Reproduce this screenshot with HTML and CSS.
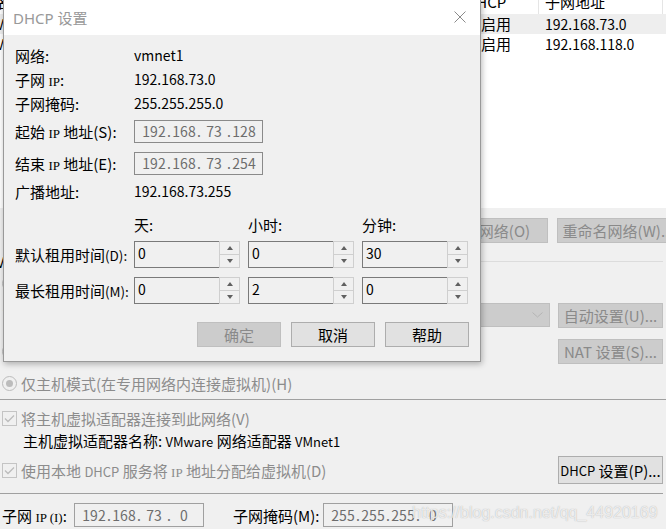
FILE: index.html
```html
<!DOCTYPE html>
<html lang="zh-CN">
<head>
    <meta charset="UTF-8">
    <title>虚拟网络编辑器 - DHCP 设置</title>
    <link rel="stylesheet" href="styles.css">
</head>
<body>
    <!-- background: virtual network editor window -->
    <div class="window">
        <div class="net-list">
            <div class="list-head">
                <span>名称</span><span>DHCP</span><span>子网地址</span>
            </div>
            <div class="list-row selected">
                <span class="num">VMnet1</span><span>已启用</span><span class="num">192.168.73.0</span>
            </div>
            <div class="list-row">
                <span class="num">VMnet8</span><span>已启用</span><span class="num">192.168.118.0</span>
            </div>
        </div>

        <div class="panel">
            <div class="net-buttons">
                <button class="btn" disabled>添加网络(E)...</button>
                <button class="btn btn-remove" disabled>移除网络(O)</button>
                <button class="btn btn-wide" disabled>重命名网络(W)...</button>
            </div>

            <div class="group-title"><span>VMnet 信息</span><i class="rule"></i></div>

            <div class="opt-row gap5">
                <span class="radio"></span>
                <span class="muted">桥接模式(将虚拟机直接连接到外部网络)(B)</span>
            </div>

            <div class="bridge-row">
                <span class="muted">已桥接至(G):</span>
                <div class="combo">
                    <svg width="11" height="6" viewBox="0 0 11 6"><polyline points="0.5,0.5 5.5,5 10.5,0.5" fill="none" stroke="#b4b4b4" stroke-width="1"/></svg>
                </div>
                <button class="btn" disabled>自动设置(U)...</button>
            </div>

            <div class="nat-row">
                <span class="opt">
                    <span class="radio"></span>
                    <span class="muted">NAT 模式(与虚拟机共享主机的 IP 地址)(N)</span>
                </span>
                <button class="btn" disabled>NAT 设置(S)...</button>
            </div>

            <div class="opt-row gap11">
                <span class="radio checked"></span>
                <span class="muted">仅主机模式(在专用网络内连接虚拟机)(H)</span>
            </div>

            <hr class="sep sep-full">

            <div class="opt-row gap10">
                <span class="check">
                    <svg width="11" height="9" viewBox="0 0 11 9"><polyline points="1,4.5 4,7.5 10,1.5" fill="none" stroke="#bcbcbc" stroke-width="1.3"/></svg>
                </span>
                <span class="muted">将主机虚拟适配器连接到此网络(V)</span>
            </div>

            <div class="adapter-name">主机虚拟适配器名称: <span class="lat">VMware</span> 网络适配器 <span class="lat">VMnet1</span></div>

            <div class="dhcp-row">
                <span class="opt">
                    <span class="check">
                        <svg width="11" height="9" viewBox="0 0 11 9"><polyline points="1,4.5 4,7.5 10,1.5" fill="none" stroke="#bcbcbc" stroke-width="1.3"/></svg>
                    </span>
                    <span class="muted">使用本地 <span class="sm">DHCP</span> 服务将 <span class="ip">IP</span> 地址分配给虚拟机(D)</span>
                </span>
                <button class="btn btn-on btn-tall"><span class="sm">DHCP</span>&nbsp;设置(P)...</button>
            </div>

            <hr class="sep sep-left">

            <div class="subnet-row">
                <span class="subnet-label">子网 <span class="ip">IP (I)</span>:</span>
                <div class="ipbox">
                    <span class="f">192</span><span class="d">.</span><span class="f">168</span><span class="d">.</span><span class="f">73</span><span class="d">.</span><span class="f">0</span>
                </div>
                <span class="mask-label">子网掩码(M):</span>
                <div class="ipbox">
                    <span class="f">255</span><span class="d">.</span><span class="f">255</span><span class="d">.</span><span class="f">255</span><span class="d">.</span><span class="f">0</span>
                </div>
            </div>
        </div>
    </div>

    <!-- foreground: DHCP dialog -->
    <div class="dialog">
        <div class="dlg-title">
            <span>DHCP 设置</span>
            <svg class="close" width="12" height="12" viewBox="0 0 12 12"><path d="M0.5 0.5 L11.5 11.5 M11.5 0.5 L0.5 11.5" stroke="#8a8a8a" stroke-width="1" fill="none"/></svg>
        </div>
        <div class="dlg-body">
            <div class="dlg-row">
                <span class="dlg-label">网络:</span><span class="num">vmnet1</span>
            </div>
            <div class="dlg-row">
                <span class="dlg-label">子网 <span class="ip">IP</span>:</span><span class="num">192.168.73.0</span>
            </div>
            <div class="dlg-row">
                <span class="dlg-label">子网掩码:</span><span class="num">255.255.255.0</span>
            </div>
            <div class="dlg-row mt4">
                <span class="dlg-label">起始 <span class="ip">IP</span> 地址(S):</span>
                <div class="ipbox ipbox-dlg">
                    <span class="f">192</span><span class="d">.</span><span class="f">168</span><span class="d">.</span><span class="f">73</span><span class="d">.</span><span class="f">128</span>
                </div>
            </div>
            <div class="dlg-row mt8">
                <span class="dlg-label">结束 <span class="ip">IP</span> 地址(E):</span>
                <div class="ipbox ipbox-dlg">
                    <span class="f">192</span><span class="d">.</span><span class="f">168</span><span class="d">.</span><span class="f">73</span><span class="d">.</span><span class="f">254</span>
                </div>
            </div>
            <div class="dlg-row mt4">
                <span class="dlg-label">广播地址:</span><span class="num">192.168.73.255</span>
            </div>

            <div class="lease-head">
                <span>天:</span><span>小时:</span><span>分钟:</span>
            </div>
            <div class="lease-row mt6">
                <span class="dlg-label">默认租用时间<span class="key">(D):</span></span>
                <div class="spin"><span class="spin-val">0</span><span class="spin-btns"><i class="up"></i><i class="down"></i></span></div>
                <div class="spin"><span class="spin-val">0</span><span class="spin-btns"><i class="up"></i><i class="down"></i></span></div>
                <div class="spin"><span class="spin-val">30</span><span class="spin-btns"><i class="up"></i><i class="down"></i></span></div>
            </div>
            <div class="lease-row mt9">
                <span class="dlg-label">最长租用时间<span class="key">(M):</span></span>
                <div class="spin"><span class="spin-val">0</span><span class="spin-btns"><i class="up"></i><i class="down"></i></span></div>
                <div class="spin"><span class="spin-val">2</span><span class="spin-btns"><i class="up"></i><i class="down"></i></span></div>
                <div class="spin"><span class="spin-val">0</span><span class="spin-btns"><i class="up"></i><i class="down"></i></span></div>
            </div>

            <div class="dlg-buttons">
                <button class="btn btn-dlg" disabled>确定</button>
                <button class="btn btn-on btn-dlg">取消</button>
                <button class="btn btn-on btn-dlg">帮助</button>
            </div>
        </div>
    </div>

    <div class="watermark">https://blog.csdn.net/qq_44920169</div>
</body>
</html>
```

FILE: styles.css
```css
* {
    box-sizing: border-box;
}
html, body {
    margin: 0;
    padding: 0;
}
body {
    width: 666px;
    height: 529px;
    overflow: hidden;
    position: relative;
    background-color: #f0f0f0;
    font-family: "Noto Sans CJK SC", "Noto Sans", sans-serif;
    font-size: 15px;
    color: #000;
}
button {
    font: inherit;
    color: inherit;
    margin: 0;
    padding: 0;
}
.num {
    font-size: 14px;
}
.sm, .lat {
    font-size: 13px;
}
.key {
    font-size: 13.5px;
}
.ip {
    font-family: "Liberation Serif", serif;
    font-size: 13px;
}
.muted {
    color: #8c8c8c;
    white-space: nowrap;
}

/* network list */
.net-list {
    height: 218px;
    margin-top: -10px;
    margin-left: -4px;
    background-color: #fff;
    line-height: 20px;
    white-space: nowrap;
}
.list-head {
    display: grid;
    grid-template-columns: 470px 72px 125px;
    height: 24px;
    line-height: 24px;
}
.list-head span:nth-child(3) {
    border-left: 1px solid #e5e5e5;
    border-right: 1px solid #e5e5e5;
    padding-left: 6px;
}
.list-row {
    display: grid;
    grid-template-columns: 470px 79px 1fr;
    height: 20px;
}
.list-row.selected {
    background-color: #eeeeee;
}

/* lower panel */
.panel {
    padding: 0 3px 0 2px;
}
.btn {
    display: flex;
    align-items: center;
    justify-content: center;
    flex-shrink: 0;
    width: 105px;
    height: 25px;
    background-color: #cccccc;
    border: 1px solid #bfbfbf;
    color: #8a8a8a;
    white-space: nowrap;
}
.btn-on {
    background-color: #e1e1e1;
    border-color: #adadad;
    color: #000;
}
.btn-wide {
    width: 122px;
}
.btn-remove {
    padding-right: 12px;
}
.btn-tall {
    height: 28px;
}
.net-buttons {
    display: flex;
    gap: 9px;
    margin-top: 10px;
    padding-left: 327px;
}
.group-title {
    display: flex;
    align-items: center;
    gap: 6px;
    height: 18px;
    margin: 9px 0 0 -6px;
    white-space: nowrap;
}
.rule {
    flex: 1;
    height: 1px;
    background-color: #dcdcdc;
}
.opt-row, .opt {
    display: flex;
    align-items: center;
    gap: 4px;
    height: 16px;
}
.gap5 { margin-top: 5px; }
.gap10 { margin-top: 10px; }
.gap11 { margin-top: 11px; }
.radio {
    width: 15px;
    height: 15px;
    border-radius: 50%;
    border: 1px solid #bcbcbc;
    background-color: #f0f0f0;
    display: flex;
    align-items: center;
    justify-content: center;
    flex-shrink: 0;
}
.radio.checked::after {
    content: "";
    width: 7px;
    height: 7px;
    border-radius: 50%;
    background-color: #bcbcbc;
}
.check {
    width: 15px;
    height: 15px;
    border: 1px solid #c4c4c4;
    background-color: #f0f0f0;
    display: flex;
    align-items: center;
    justify-content: center;
    flex-shrink: 0;
}
.bridge-row {
    display: flex;
    align-items: center;
    gap: 8px;
    height: 26px;
    margin-top: 11px;
}
.combo {
    margin-left: auto;
    width: 300px;
    height: 24px;
    background-color: #cccccc;
    border: 1px solid #bfbfbf;
    display: flex;
    align-items: center;
    justify-content: flex-end;
    padding-right: 6px;
}
.nat-row, .dhcp-row {
    display: flex;
    align-items: center;
    justify-content: space-between;
}
.nat-row {
    margin-top: 11px;
    height: 25px;
}
.dhcp-row {
    margin-top: 7px;
    height: 28px;
}
.sep {
    border: none;
    height: 1px;
    background-color: #a0a0a0;
    margin: 0;
}
.sep-full {
    margin: 8px -3px 0 -2px;
}
.sep-left {
    margin: 9px 0 0 -2px;
}
.adapter-name {
    margin: 7px 0 0 21px;
    height: 16px;
    line-height: 16px;
    white-space: nowrap;
}
.subnet-row {
    display: flex;
    align-items: center;
    height: 24px;
    margin-top: 9px;
    white-space: nowrap;
}
.subnet-label {
    width: 72px;
}
.mask-label {
    width: 90px;
    margin-left: 29px;
}

/* ip address control */
.ipbox {
    display: flex;
    align-items: center;
    width: 130px;
    height: 24px;
    padding-left: 6px;
    border: 1px solid #a0a0a0;
    background-color: #f0f0f0;
    color: #6d6d6d;
    font-size: 14px;
}
.ipbox .f {
    width: 26px;
    text-align: center;
}
.ipbox .d {
    width: 4px;
    text-align: center;
}
.ipbox-dlg {
    width: 129px;
    height: 23px;
    border-color: #8a8a8a;
}

/* dialog */
.dialog {
    position: absolute;
    top: -1px;
    left: 3px;
    width: 478px;
    background-color: #f0f0f0;
    border: 1px solid #999;
    box-shadow: 1px 2px 6px rgba(0, 0, 0, 0.28);
}
.dlg-title {
    display: flex;
    align-items: center;
    justify-content: space-between;
    height: 35px;
    padding: 0 14px 1px 9px;
    background-color: #fff;
    font-family: "Noto Sans", "Noto Sans CJK SC", sans-serif;
    font-size: 15px;
    color: #999;
}
.dlg-body {
    padding: 8px 11px 14px 11px;
}
.dlg-row {
    display: flex;
    align-items: center;
    height: 24px;
    white-space: nowrap;
}
.dlg-label {
    width: 119px;
    flex-shrink: 0;
    white-space: nowrap;
}
.mt4 { margin-top: 4px; }
.mt6 { margin-top: 6px; }
.mt8 { margin-top: 8px; }
.mt9 { margin-top: 9px; }
.lease-head {
    display: flex;
    gap: 8px;
    height: 20px;
    line-height: 20px;
    margin-top: 12px;
    padding-left: 119px;
}
.lease-head span {
    width: 106px;
}
.lease-row {
    display: flex;
    align-items: center;
    gap: 8px;
    height: 27px;
}
.lease-row .dlg-label {
    margin-right: -8px;
}
.spin {
    display: flex;
    width: 106px;
    height: 27px;
}
.spin-val {
    width: 85px;
    border: 1px solid #7a7a7a;
    border-right: none;
    padding-left: 3px;
    line-height: 22px;
    font-size: 14px;
    background-color: #f0f0f0;
}
.spin-btns {
    width: 21px;
    display: flex;
    flex-direction: column;
}
.spin-btns i {
    flex: 1;
    display: flex;
    align-items: center;
    justify-content: center;
    border: 1px solid #cfcfcf;
    background-color: #f0f0f0;
}
.spin-btns i + i {
    border-top: none;
}
.spin-btns .up::before {
    content: "";
    border-left: 3.5px solid transparent;
    border-right: 3.5px solid transparent;
    border-bottom: 4px solid #606060;
}
.spin-btns .down::before {
    content: "";
    border-left: 3.5px solid transparent;
    border-right: 3.5px solid transparent;
    border-top: 4px solid #606060;
}
.dlg-buttons {
    display: flex;
    justify-content: flex-end;
    gap: 10px;
    margin-top: 18px;
}
.btn-dlg {
    width: 84px;
}

.watermark {
    position: absolute;
    left: 412px;
    top: 503px;
    font-family: "Liberation Sans", sans-serif;
    font-size: 16px;
    line-height: 20px;
    color: rgba(255, 255, 255, 0.75);
    text-shadow: 0 0 1px rgba(120, 120, 120, 0.6);
    white-space: nowrap;
}
```
